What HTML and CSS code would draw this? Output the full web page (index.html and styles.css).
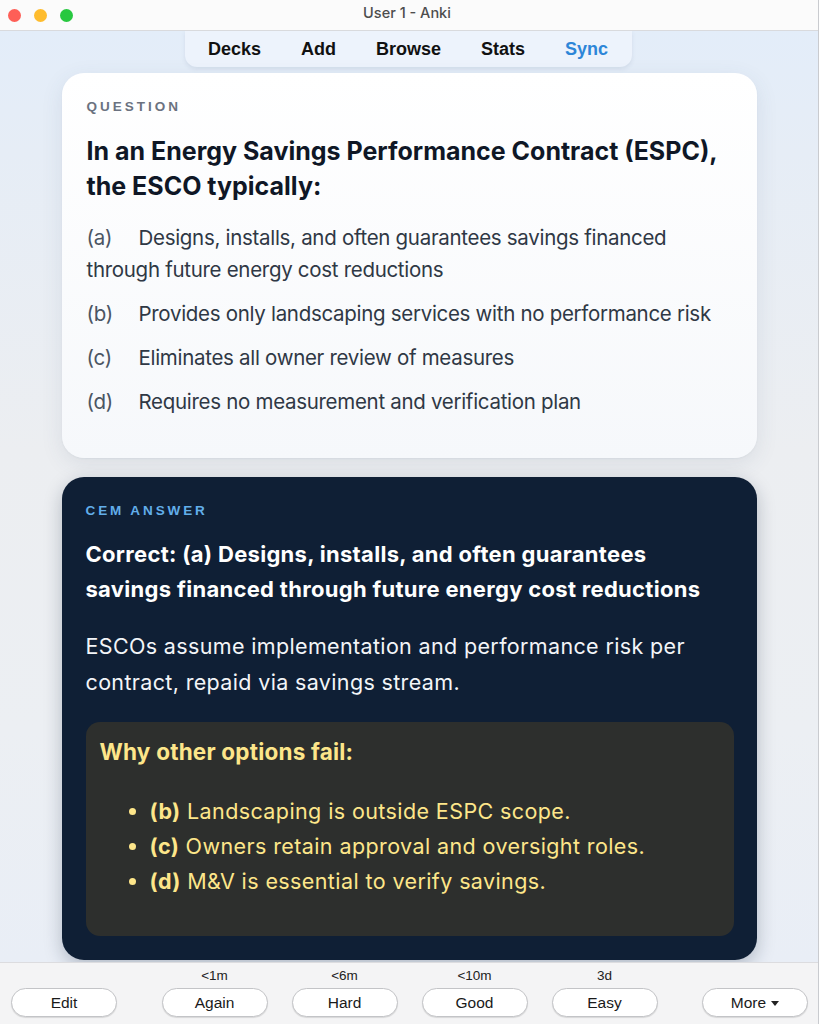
FILE: index.html
```html
<!DOCTYPE html>
<html>
<head>
<meta charset="utf-8">
<link rel="stylesheet" href="styles.css">
</head>
<body>
<div class="window">
  <header class="titlebar">
    <div class="lights">
      <span class="light red"></span>
      <span class="light yellow"></span>
      <span class="light green"></span>
    </div>
    <div class="title">User 1 - Anki</div>
  </header>
  <main class="content">
    <nav class="toolbar">
      <a class="nav-item">Decks</a>
      <a class="nav-item">Add</a>
      <a class="nav-item">Browse</a>
      <a class="nav-item">Stats</a>
      <a class="nav-item sync">Sync</a>
    </nav>
    <section class="card question">
      <div class="eyebrow">QUESTION</div>
      <h1 class="q-title">In an Energy Savings Performance Contract (ESPC), the ESCO typically:</h1>
      <div class="options">
        <p class="opt"><span class="opt-key">(a)</span>Designs, installs, and often guarantees savings financed through future energy cost reductions</p>
        <p class="opt"><span class="opt-key">(b)</span>Provides only landscaping services with no performance risk</p>
        <p class="opt"><span class="opt-key">(c)</span>Eliminates all owner review of measures</p>
        <p class="opt"><span class="opt-key">(d)</span>Requires no measurement and verification plan</p>
      </div>
    </section>
    <section class="card answer">
      <div class="eyebrow blue">CEM ANSWER</div>
      <h2 class="a-title">Correct: (a) Designs, installs, and often guarantees savings financed through future energy cost reductions</h2>
      <p class="a-body">ESCOs assume implementation and performance risk per contract, repaid via savings stream.</p>
      <div class="why">
        <div class="why-title">Why other options fail:</div>
        <ul class="why-list">
          <li><b>(b)</b> Landscaping is outside ESPC scope.</li>
          <li><b>(c)</b> Owners retain approval and oversight roles.</li>
          <li><b>(d)</b> M&amp;V is essential to verify savings.</li>
        </ul>
      </div>
    </section>
  </main>
  <footer class="bottombar">
    <div class="btn-col"><span class="due"></span><button class="btn">Edit</button></div>
    <div class="answers">
      <div class="btn-col"><span class="due">&lt;1m</span><button class="btn">Again</button></div>
      <div class="btn-col"><span class="due">&lt;6m</span><button class="btn">Hard</button></div>
      <div class="btn-col"><span class="due">&lt;10m</span><button class="btn">Good</button></div>
      <div class="btn-col"><span class="due">3d</span><button class="btn">Easy</button></div>
    </div>
    <div class="btn-col"><span class="due"></span><button class="btn">More <span class="caret"></span></button></div>
  </footer>
</div>
</body>
</html>
```

FILE: styles.css
```css
* { box-sizing: border-box; }
html, body { margin: 0; padding: 0; background: #ffffff; }
body { width: 822px; height: 1024px; overflow: hidden; font-family: "Liberation Sans", Arial, sans-serif; }

.window {
  width: 819px;
  height: 1024px;
  display: flex;
  flex-direction: column;
  border-right: 1px solid #c9cbcf;
}

.titlebar {
  height: 31px;
  flex: none;
  background: #fbfbfb;
  border-bottom: 1px solid #d9dadd;
  display: flex;
  align-items: center;
  position: relative;
}
.lights { display: flex; gap: 13px; padding-left: 8px; }
.light { width: 13px; height: 13px; border-radius: 50%; display: block; }
.red { background: #fe5f57; }
.yellow { background: #febc2e; }
.green { background: #28c840; }
.title {
  position: absolute;
  left: 0; right: 0; top: 0; height: 30px;
  line-height: 25px;
  text-align: center;
  font-size: 14.5px;
  color: #4d4d4d;
  font-family: "Inter", "Liberation Sans", sans-serif;
  font-weight: 500;
  margin-left: -4px;
}

.content {
  flex: 1;
  background: linear-gradient(180deg, #e3edf9 0px, #e6edf6 120px, #eceef1 420px, #eceff3 700px, #e9eef6 930px);
  display: flex;
  flex-direction: column;
  align-items: center;
  overflow: hidden;
}

.toolbar {
  width: 447px;
  height: 36px;
  margin-left: -2px;
  flex: none;
  background: #edf3fc;
  border-radius: 0 0 12px 12px;
  box-shadow: 0 2px 4px rgba(80, 100, 130, 0.12);
  display: flex;
  align-items: center;
  justify-content: center;
  gap: 40px;
}
.nav-item {
  font-family: "Liberation Sans", Arial, sans-serif;
  font-weight: bold;
  font-size: 18px;
  color: #111;
}
.nav-item.sync { color: #2d86d8; }

.card {
  width: 695px;
  border-radius: 22px;
  flex: none;
  font-family: Inter, Roboto, "Liberation Sans", sans-serif;
}
.question {
  margin-top: 6px;
  background: linear-gradient(180deg, #ffffff 0%, #f6f8fb 100%);
  box-shadow: 0 6px 22px rgba(60, 80, 110, 0.10), 0 1px 2px rgba(60, 80, 110, 0.06);
  padding: 26px 25px 40px 25px;
}
.eyebrow {
  font-family: "Liberation Sans", Arial, sans-serif;
  font-weight: bold;
  font-size: 13.5px;
  letter-spacing: 3px;
  line-height: 16px;
  color: #6b7280;
}
.eyebrow.blue { color: #62aeea; letter-spacing: 2.9px; }

.q-title {
  margin: 19px 0 0 0;
  font-size: 25px;
  line-height: 35px;
  font-weight: 700;
  color: #0f1726;
}
.options { margin-top: 18px; }
.opt {
  margin: 0 0 12px 0;
  font-size: 20.5px;
  line-height: 32px;
  color: #2f3845;
  letter-spacing: -0.3px;
}
.opt:last-child { margin-bottom: 0; }
.opt-key { display: inline-block; width: 52px; color: #4b5563; }

.answer {
  margin-top: 19px;
  background: #0f1f35;
  box-shadow: 0 6px 18px rgba(15, 30, 55, 0.25);
  padding: 26px 23px 24px 24px;
  color: #ffffff;
}
.a-title {
  margin: 18px 0 0 0;
  max-width: 630px;
  font-size: 22px;
  line-height: 35px;
  font-weight: 700;
  color: #ffffff;
  letter-spacing: 0.3px;
}
.a-body {
  margin: 21px 0 0 0;
  font-size: 21.5px;
  line-height: 36px;
  color: #f3f5f8;
  letter-spacing: 0.35px;
}
.why {
  margin-top: 22px;
  background: #2d2f2d;
  border-radius: 14px;
  padding: 16px 16px 37px 14px;
  color: #fde68a;
}
.why-title {
  font-size: 22.5px;
  line-height: 28px;
  font-weight: 700;
  letter-spacing: 0.2px;
}
.why-list {
  margin: 28px 0 0 0;
  padding-left: 50px;
  font-size: 21.5px;
  line-height: 35px;
  letter-spacing: 0.4px;
}
.why-list b { font-weight: 700; }

.bottombar {
  height: 62px;
  flex: none;
  background: #f4f4f5;
  border-top: 1px solid #dcdcdf;
  display: flex;
  justify-content: space-between;
  padding: 5px 10px 0 11px;
  font-family: "Liberation Sans", Arial, sans-serif;
}
.answers { display: flex; gap: 24px; }
.btn-col { display: flex; flex-direction: column; align-items: center; }
.due { height: 16px; line-height: 16px; font-size: 13.5px; color: #222; }
.btn {
  margin-top: 4px;
  width: 106px;
  height: 29px;
  border-radius: 15px;
  background: #ffffff;
  border: 1px solid #c3c4c7;
  box-shadow: 0 1px 1px rgba(0, 0, 0, 0.12);
  font-family: "Liberation Sans", Arial, sans-serif;
  font-size: 15.5px;
  color: #1a1a1a;
  padding: 0;
  display: flex;
  align-items: center;
  justify-content: center;
  gap: 5px;
}
.caret {
  width: 0; height: 0;
  border-left: 4.5px solid transparent;
  border-right: 4.5px solid transparent;
  border-top: 5px solid #222;
  margin-top: 2px;
}
```
